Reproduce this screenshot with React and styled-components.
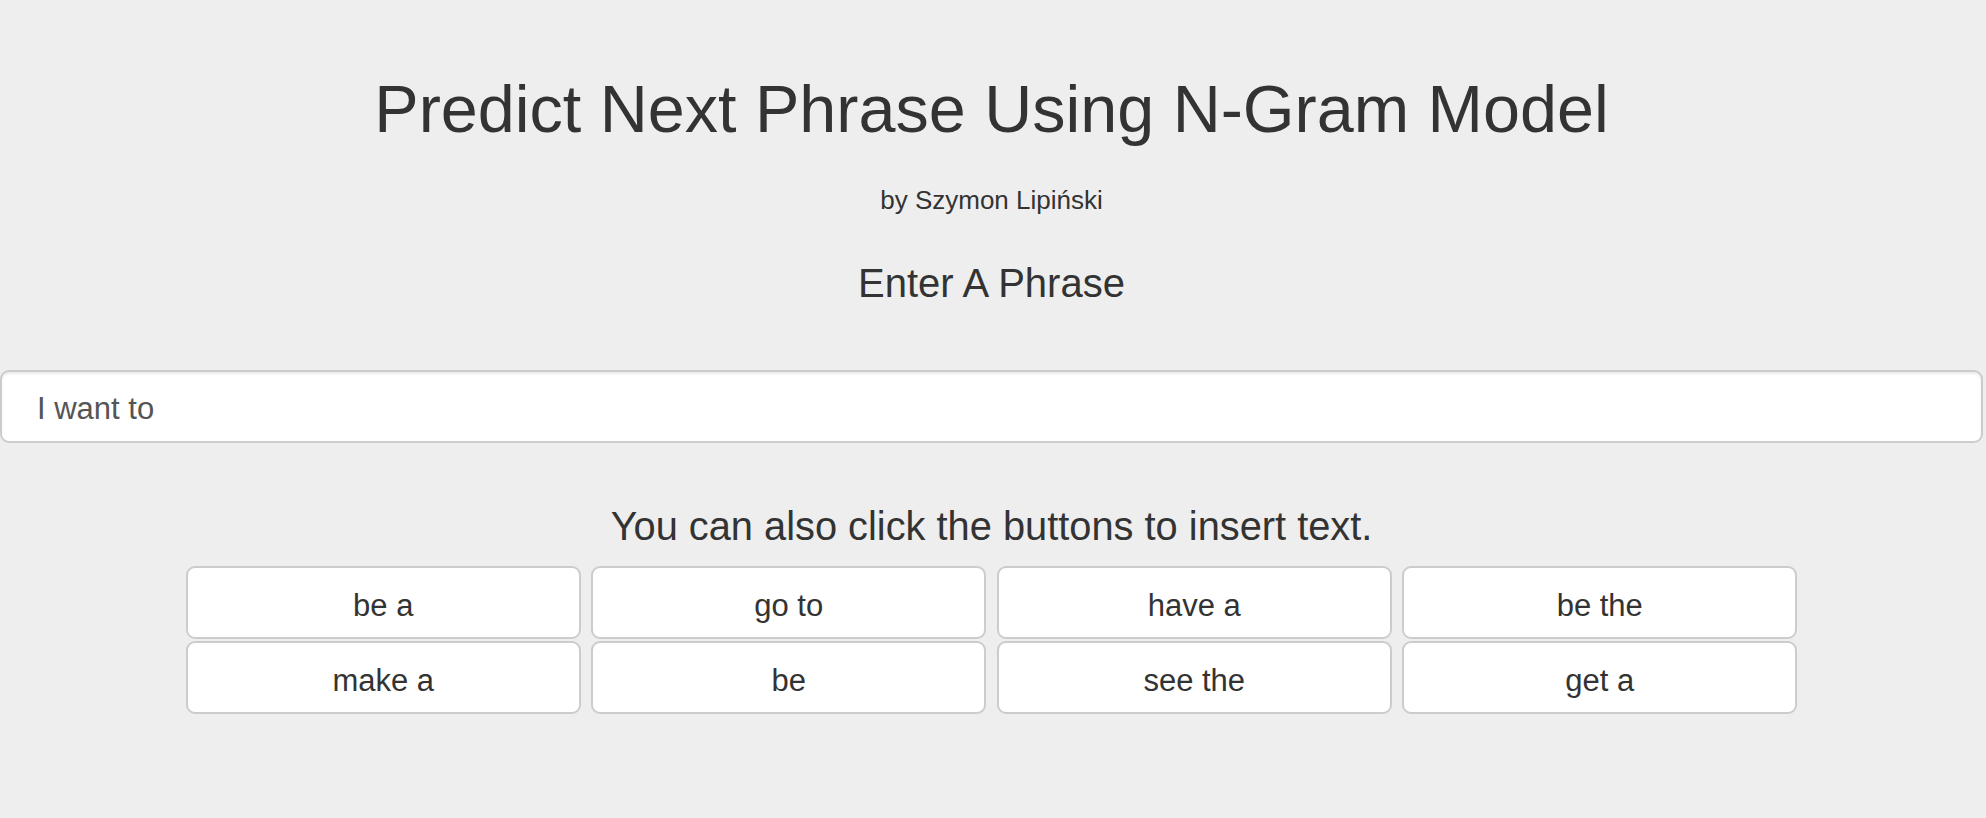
import React, { useState } from "react";
import styled, { createGlobalStyle } from "styled-components";

const Global = createGlobalStyle`
  html, body {
    margin: 0;
    padding: 0;
    background: #eeeeee;
  }
  body {
    font-family: "Liberation Sans", Arial, Helvetica, sans-serif;
    color: #333333;
  }
`;

const Page = styled.main`
  width: calc(100% - 3px);
  padding-top: 72px;
  padding-bottom: 100px;
  display: flex;
  flex-direction: column;
  align-items: center;
`;

const Title = styled.h1`
  margin: 0;
  font-size: 66.5px;
  line-height: 74px;
  font-weight: 400;
  color: #333333;
  text-align: center;
`;

const Byline = styled.p`
  margin: 39px 0 0;
  font-size: 26px;
  line-height: 30px;
  color: #333333;
  text-align: center;
`;

const Heading = styled.h3`
  margin: ${(p) => p.$top}px 0 0;
  font-size: ${(p) => p.$size}px;
  line-height: 45px;
  font-weight: 400;
  color: #333333;
  text-align: center;
`;

const PhraseInput = styled.input`
  box-sizing: border-box;
  display: block;
  width: 100%;
  height: 73px;
  margin-top: 64px;
  padding: 5px 35px 0;
  font-family: "Liberation Sans", Arial, Helvetica, sans-serif;
  font-size: 31px;
  color: #555555;
  background: #ffffff;
  border: 2px solid #cccccc;
  border-radius: 9px;
  box-shadow: inset 0 2px 2px rgba(0, 0, 0, 0.075);
  outline: none;
`;

const ButtonGrid = styled.div`
  margin-top: 17px;
  display: grid;
  grid-template-columns: repeat(4, 395px);
  grid-auto-rows: 73px;
  column-gap: 10.5px;
  row-gap: 2px;
`;

const PhraseButton = styled.button`
  box-sizing: border-box;
  height: 73px;
  padding: 7px 12px 0;
  font-family: "Liberation Sans", Arial, Helvetica, sans-serif;
  font-size: 31px;
  color: #333333;
  background: #ffffff;
  border: 2px solid #cccccc;
  border-radius: 9px;
  cursor: pointer;
  &:hover {
    background: #e6e6e6;
    border-color: #adadad;
  }
`;

const SUGGESTIONS = [
  "be a",
  "go to",
  "have a",
  "be the",
  "make a",
  "be",
  "see the",
  "get a",
];

export default function App() {
  const [text, setText] = useState("I want to");
  return (
    <>
      <Global />
      <Page>
        <Title>Predict Next Phrase Using N-Gram Model</Title>
        <Byline>by Szymon Lipiński</Byline>
        <Heading $top={46} $size={40}>Enter A Phrase</Heading>
        <PhraseInput
          type="text"
          value={text}
          onChange={(e) => setText(e.target.value)}
        />
        <Heading $top={61} $size={39.8}>
          You can also click the buttons to insert text.
        </Heading>
        <ButtonGrid>
          {SUGGESTIONS.map((s) => (
            <PhraseButton key={s} onClick={() => setText((t) => t + " " + s)}>
              {s}
            </PhraseButton>
          ))}
        </ButtonGrid>
      </Page>
    </>
  );
}
